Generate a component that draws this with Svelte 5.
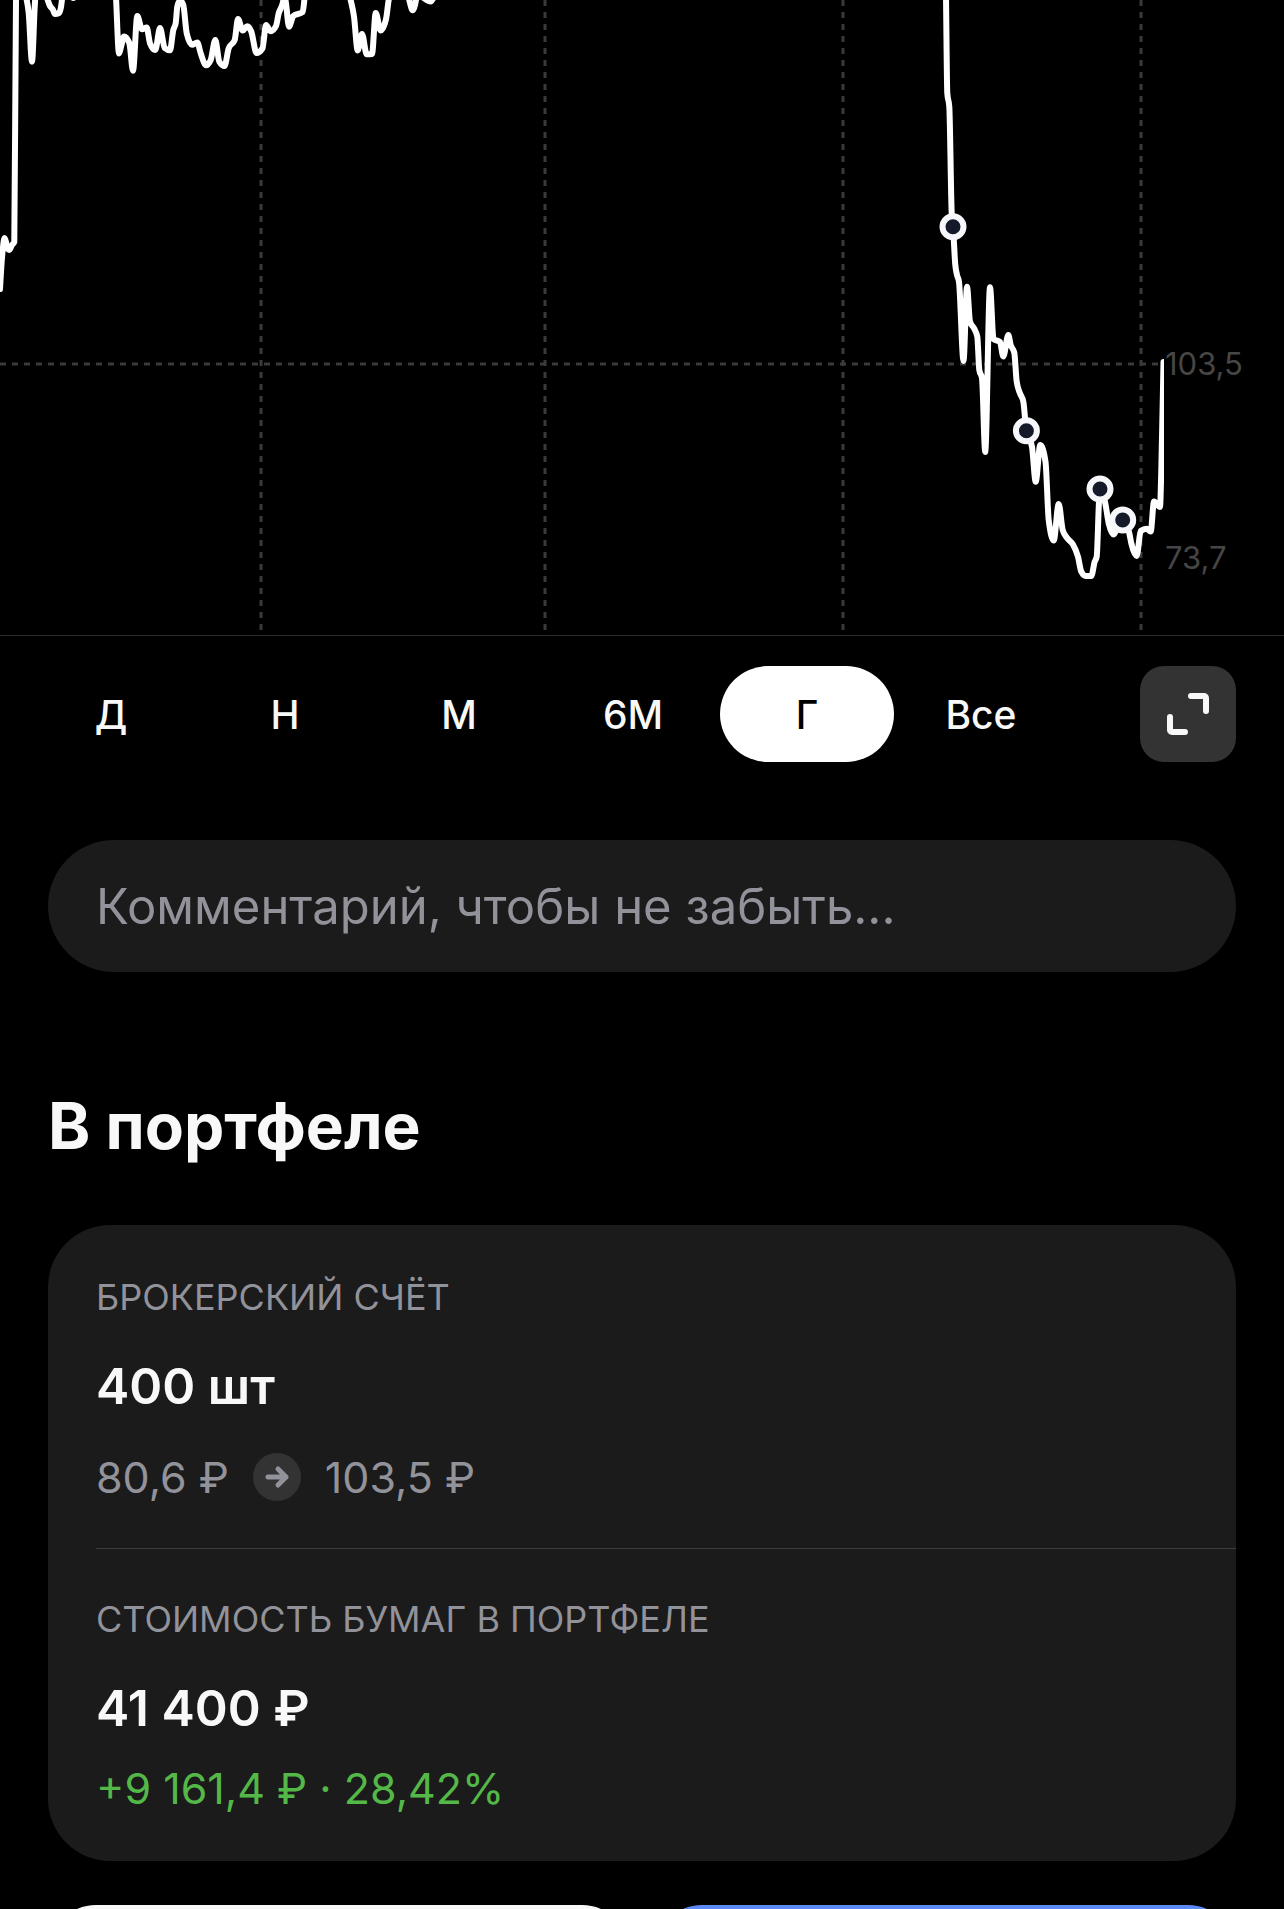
<script lang="ts">
	const ranges = ['Д', 'Н', 'М', '6М', 'Г', 'Все'];

	const gridX = [261, 545, 843, 1141];

	const deals = [
		{ x: 953, y: 226.7 },
		{ x: 1026.4, y: 430.7 },
		{ x: 1100, y: 489 },
		{ x: 1122.7, y: 520 }
	];

	const priceRuns = [
		'0,289 1.3,267 2.7,250 4.5,238 6,242 7,247 9.3,250 12,245 14.3,242 16,0 17,-20 26,-3 28.7,13 32,61.7 34.7,7 35.3,-3',
		'46.7,-3 50,6 52.7,9.3 55,14 59,13 61,7 62.3,-3',
		'70.7,-4 73.3,-2 76,-4',
		'116,-3 119,53.5 121,47 124,36.5 129.3,43 133,70.7 137.3,16 142,29.3 146.7,27.5 150,43.3 155.3,50 160,28 164.7,48 170,50.3 173.3,30 175.7,23.3 177.3,6.7 180,0.5 183.3,5 186.7,33.3 192,44.7 197.3,42.5 200.7,53.3 206,65.3 210.7,60 215.3,40 219.3,61.7 224.5,66 228.7,48.3 234.7,40 238,19 242.7,30.5 247.3,26.3 251.3,31.7 256.5,53 262.5,48.3 266,25 270.7,31.3 276,26 278.7,13.3 282.7,3.3 284,-3',
		'285,-3 286,3.3 289,26.7 293.3,16 302.7,12 304.7,-3',
		'350,-3 354,16.7 357.7,50.5 362,34 366.7,54.3 372,54 375.7,13 380.7,30.5 386,19.3 388.7,0 389.3,-3',
		'408.7,-2 412.7,10.3 416,0 416.5,-3',
		'422,-3 430.7,1.5 434,-3',
		'946,-3 947.3,93.3 949.3,106.7 951.7,213.3 953,226.7 955.3,265 957,275 959,282 963.5,361 967,286.7 970,321.7 974,328.3 977.3,336.7 979.3,370 982,378.3 985.2,452 990,287.3 993.5,339 1000,342 1003.3,356.5 1008.3,335 1010.7,345 1014.3,352.7 1016.7,381.7 1020,393.3 1023.3,401.7 1026.4,430.7 1032,446.7 1035.7,481.7 1040.3,445 1045.5,461.7 1048.7,520 1053.7,540.5 1058.7,504 1062.7,530 1067.3,538.3 1072.7,544 1078,556.7 1081.3,571.7 1085.7,576 1091.3,576 1094.7,561.7 1096.7,556.7 1099,501.7 1100,489 1105.3,503.3 1108.7,523.3 1113.7,534.5 1118.7,525 1122.7,520 1129.3,533.3 1131.3,543.3 1136.7,556 1140.7,531 1146.7,528.7 1150.7,531.5 1154,501.5 1160,507 1161.3,470 1163.5,362'
	];

	// Monotone cubic through the points, so peaks stay rounded and never overshoot
	function smoothPath(run: string) {
		const pts = run.split(' ').map((p) => p.split(',').map(Number));
		const slopes = pts
			.slice(1)
			.map(([x, y], i) => (y - pts[i][1]) / (x - pts[i][0]));
		const tangents = pts.map((p, i) => {
			if (i === 0) return slopes[0];
			if (i === pts.length - 1) return slopes[i - 1];
			const a = slopes[i - 1];
			const b = slopes[i];
			const h0 = p[0] - pts[i - 1][0];
			const h1 = pts[i + 1][0] - p[0];
			const mean = (a * h1 + b * h0) / (h0 + h1);
			return (
				(Math.sign(a) + Math.sign(b)) * Math.min(Math.abs(a), Math.abs(b), Math.abs(mean) / 2)
			);
		});
		let d = `M${pts[0][0]} ${pts[0][1]}`;
		for (let i = 1; i < pts.length; i++) {
			const [x0, y0] = pts[i - 1];
			const [x1, y1] = pts[i];
			const dx = (x1 - x0) / 3;
			d += `C${x0 + dx} ${y0 + dx * tangents[i - 1]} ${x1 - dx} ${y1 - dx * tangents[i]} ${x1} ${y1}`;
		}
		return d;
	}

	let selected = $state('Г');
	let comment = $state('');
</script>

<main>
	<svg class="chart" viewBox="0 0 1284 635" role="img" aria-label="График цены">
		<defs>
			<clipPath id="plot">
				<rect x="0" y="0" width="1164" height="635" />
			</clipPath>
		</defs>
		<g class="grid">
			{#each gridX as x}
				<line x1={x} y1="0" x2={x} y2="630" />
			{/each}
			<line x1="0" y1="364" x2="1164" y2="364" />
		</g>
		<g class="price-line" clip-path="url(#plot)">
			{#each priceRuns as run}
				<path d={smoothPath(run)} />
			{/each}
		</g>
		<g class="deals">
			{#each deals as d}
				<circle cx={d.x} cy={d.y} r="10.5" />
			{/each}
		</g>
		<text x="1165" y="375">103,5</text>
		<text x="1165" y="569">73,7</text>
	</svg>

	<div class="toolbar">
		<div class="ranges">
			{#each ranges as r}
				<button
					type="button"
					class:active={selected === r}
					aria-pressed={selected === r}
					onclick={() => (selected = r)}>{r}</button
				>
			{/each}
		</div>
		<button type="button" class="expand" aria-label="На весь экран">
			<svg viewBox="0 0 96 96" aria-hidden="true">
				<path d="M51 30h13a2 2 0 0 1 2 2v13M30 51v13a2 2 0 0 0 2 2h13" />
			</svg>
		</button>
	</div>

	<div class="content">
		<input
			class="comment"
			type="text"
			aria-label="Комментарий"
			placeholder="Комментарий, чтобы не забыть..."
			bind:value={comment}
		/>

		<h1>В портфеле</h1>

		<div class="card">
			<section>
				<h2>БРОКЕРСКИЙ СЧЁТ</h2>
				<p class="value">400 шт</p>
				<div class="line prices">
					<span>80,6 ₽</span>
					<svg class="arrow" viewBox="0 0 48 48" aria-hidden="true">
						<circle cx="24" cy="24" r="24" />
						<path d="M15 24h18M25 16l8 8-8 8" />
					</svg>
					<span>103,5 ₽</span>
				</div>
			</section>
			<section>
				<h2>СТОИМОСТЬ БУМАГ В ПОРТФЕЛЕ</h2>
				<p class="value">41 400 ₽</p>
				<p class="line profit">+9 161,4 ₽ · 28,42%</p>
			</section>
		</div>

		<div class="actions">
			<button type="button" class="sell" aria-label="Продать"></button>
			<button type="button" class="buy" aria-label="Купить"></button>
		</div>
	</div>
</main>

<style>
	:global(body) {
		margin: 0;
		background: #000;
	}

	main {
		height: 100vh;
		overflow: hidden;
		background: #000;
		color: #f8f8f8;
		font-family: Inter, 'Noto Sans', sans-serif;
	}

	button,
	input {
		font: inherit;
		color: inherit;
		border: none;
		padding: 0;
	}

	button {
		cursor: pointer;
	}

	.chart {
		display: block;
		width: 100%;
		border-bottom: 1px solid #2b2b2b;
	}

	.grid {
		stroke: #3a3a3a;
		stroke-width: 3;
		stroke-dasharray: 6 6;
	}

	.price-line {
		fill: none;
		stroke: #fff;
		stroke-width: 6;
		stroke-linecap: round;
		stroke-linejoin: round;
	}

	.deals {
		fill: #151a2b;
		stroke: #f6f7fa;
		stroke-width: 6;
	}

	.chart text {
		fill: #464646;
		font-size: 31px;
	}

	.toolbar {
		display: flex;
		justify-content: space-between;
		padding: 30px 48px 0 24px;
	}

	.ranges {
		display: flex;
		flex: 0 1 1044px;
	}

	.ranges button {
		flex: 1;
		height: 96px;
		border-radius: 48px;
		background: none;
		font-size: 39px;
		font-weight: 500;
	}

	.ranges .active {
		background: #fff;
		color: #000;
	}

	.expand {
		width: 96px;
		height: 96px;
		border-radius: 24px;
		background: #333;
	}

	.expand svg {
		display: block;
	}

	.expand path {
		fill: none;
		stroke: #f8f8f8;
		stroke-width: 6;
		stroke-linecap: round;
	}

	.content {
		padding: 78px 48px 0;
	}

	.comment {
		display: block;
		box-sizing: border-box;
		width: 100%;
		height: 132px;
		padding: 0 48px;
		border-radius: 66px;
		background: #1b1b1b;
		font-size: 49px;
	}

	.comment::placeholder {
		color: #92929a;
		opacity: 1;
	}

	h1 {
		margin: 114px 0 59px;
		font-size: 64px;
		line-height: 80px;
		font-weight: 700;
	}

	.card {
		padding: 2px 0;
		border-radius: 62px;
		background: #1b1b1b;
	}

	section {
		margin-left: 48px;
		padding: 47px 48px 47px 0;
	}

	section + section {
		border-top: 1px solid #3c3c3c;
	}

	h2 {
		margin: 0 0 36px;
		color: #92929a;
		font-size: 36px;
		line-height: 46px;
		font-weight: 400;
	}

	.value {
		margin: 0;
		font-size: 50px;
		line-height: 60px;
		font-weight: 600;
	}

	.line {
		font-size: 43px;
		line-height: 48px;
	}

	.prices {
		display: flex;
		align-items: center;
		gap: 24px;
		margin: 37px 0 0;
		color: #92929a;
	}

	.arrow {
		width: 48px;
		height: 48px;
	}

	.arrow circle {
		fill: #333;
	}

	.arrow path {
		fill: none;
		stroke: #92929a;
		stroke-width: 5;
		stroke-linecap: round;
		stroke-linejoin: round;
	}

	.profit {
		margin: 26px 0 0;
		color: #54b848;
	}

	.actions {
		display: grid;
		grid-template-columns: 1fr 1fr;
		gap: 24px;
		margin-top: 44px;
	}

	.actions button {
		height: 168px;
		border-radius: 48px;
	}

	.sell {
		background: #f8f8f8;
	}

	.buy {
		background: #5b8af5;
	}
</style>
